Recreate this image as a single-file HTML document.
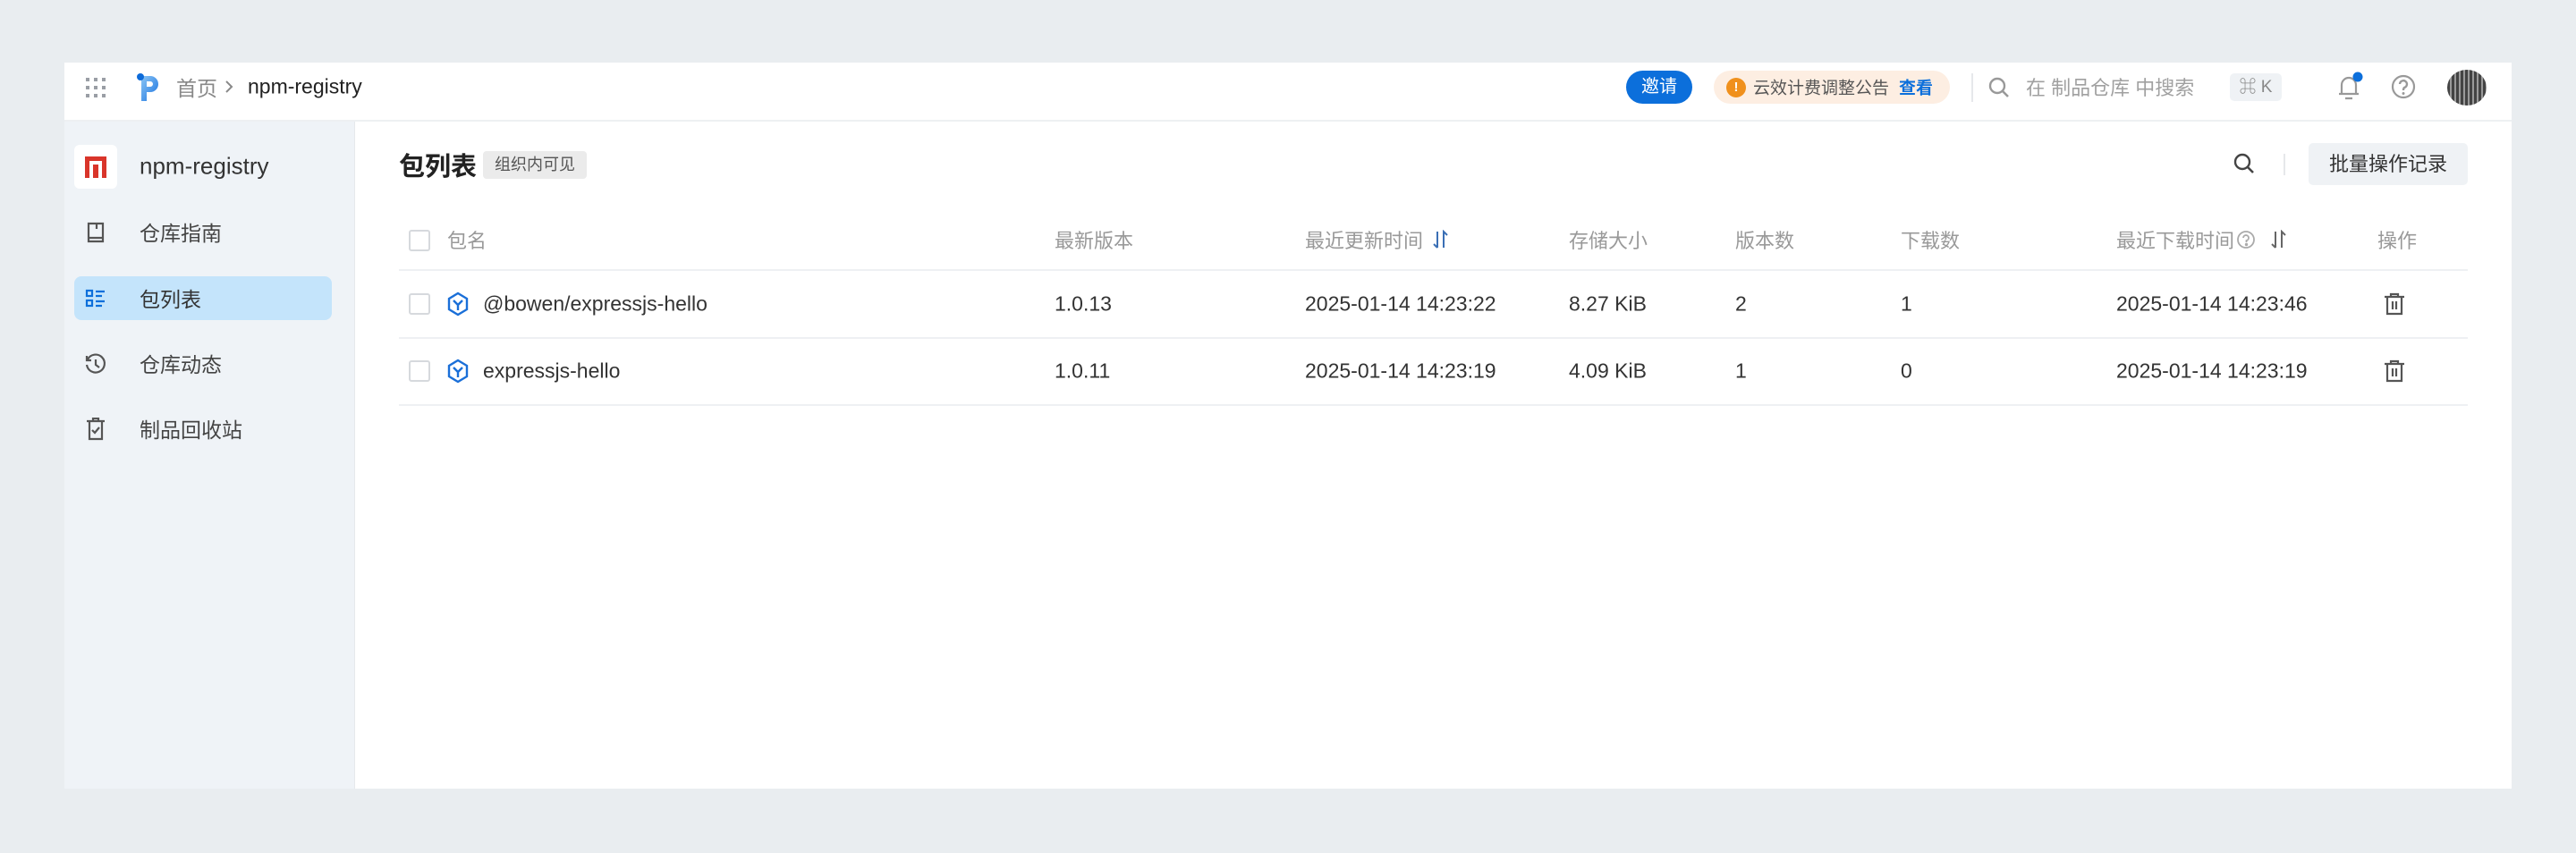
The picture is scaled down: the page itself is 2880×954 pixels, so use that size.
<!DOCTYPE html>
<html><head><meta charset="utf-8">
<style>
*{margin:0;padding:0;box-sizing:border-box}
body{width:2880px;height:954px;background:#e9edf0;font-family:"Liberation Sans","Noto Sans CJK SC",sans-serif;position:relative;overflow:hidden;color:#333}
.a{position:absolute;white-space:nowrap}
.card{position:absolute;left:72px;top:70px;width:2736px;height:812px;background:#fff}
.hdr{position:absolute;left:72px;top:70px;width:2736px;height:66px;border-bottom:2px solid #eef0f2;background:#fff}
.side{position:absolute;left:72px;top:136px;width:325px;height:746px;background:#eff3f7;border-right:1px solid #e6e9ec}
.t{font-size:23px;transform:translateY(-50%)}
.g{color:#999}
.line{position:absolute;left:446px;width:2313px;height:2px;background:#eef0f3}
.cb{position:absolute;width:24px;height:24px;border:2px solid #d6d9dd;border-radius:3px;background:#fff;left:457px}
</style></head><body>
<div class="card"></div>
<div class="hdr"></div>
<svg class="a" style="left:96px;top:87px" width="22" height="22" viewBox="0 0 22 22" fill="#9a9ea5">
<rect x="0" y="0" width="4" height="4"/><rect x="9" y="0" width="4" height="4"/><rect x="18" y="0" width="4" height="4"/>
<rect x="0" y="9" width="4" height="4"/><rect x="9" y="9" width="4" height="4"/><rect x="18" y="9" width="4" height="4"/>
<rect x="0" y="18" width="4" height="4"/><rect x="9" y="18" width="4" height="4"/><rect x="18" y="18" width="4" height="4"/></svg>
<svg class="a" style="left:152px;top:81px" width="28" height="32" viewBox="0 0 28 32">
<defs><linearGradient id="pg" x1="0" y1="0" x2="1" y2="1"><stop offset="0" stop-color="#8cc6f5"/><stop offset="1" stop-color="#1a73e0"/></linearGradient></defs>
<path d="M6 4 H16 A9 9 0 0 1 16 22 H12 V32 H6 Z M12 10 V16 H16 A3 3 0 0 0 16 10Z" fill="url(#pg)"/>
<circle cx="5" cy="5" r="4" fill="#0d6bd9"/></svg>
<div class="a t g" style="left:197px;top:97px;font-size:23px;color:#888">首页</div>
<svg class="a" style="left:250px;top:89px" width="12" height="16" viewBox="0 0 12 16"><path d="M3 2 L9 8 L3 14" fill="none" stroke="#888" stroke-width="2"/></svg>
<div class="a t" style="left:277px;top:97px;color:#222">npm-registry</div>
<div class="a" style="left:1818px;top:79px;width:74px;height:37px;border-radius:19px;background:#0c6fdb;color:#fff;font-size:20px;line-height:37px;text-align:center">邀请</div>
<div class="a" style="left:1916px;top:79px;width:264px;height:37px;border-radius:19px;background:#fdeee2"></div>
<div class="a" style="left:1930px;top:87px;width:22px;height:22px;border-radius:50%;background:#f0901c;color:#fff;font-size:15px;line-height:22px;text-align:center;font-weight:bold">!</div>
<div class="a t" style="left:1960px;top:97px;font-size:19px;color:#555">云效计费调整公告</div>
<div class="a t" style="left:2123px;top:97px;font-size:19px;color:#0c6fdb;font-weight:bold">查看</div>
<div class="a" style="left:2204px;top:82px;width:2px;height:32px;background:#e6e8eb"></div>
<svg class="a" style="left:2222px;top:85px" width="26" height="26" viewBox="0 0 26 26"><circle cx="11" cy="11" r="8" fill="none" stroke="#999" stroke-width="2.4"/><path d="M17 17 L23 23" stroke="#999" stroke-width="2.6"/></svg>
<div class="a t" style="left:2265px;top:97px;font-size:22px;color:#a0a0a0">在 制品仓库 中搜索</div>
<div class="a" style="left:2493px;top:82px;width:58px;height:31px;border-radius:5px;background:#eff2f5;color:#888;font-size:19px;line-height:31px;text-align:center">⌘ K</div>
<svg class="a" style="left:2612px;top:80px" width="30" height="34" viewBox="0 0 30 34"><path d="M6 25 V15 A8 8 0 0 1 22 15 V25 Z M3 25 H25 M10 30 H18" fill="none" stroke="#999" stroke-width="2.2"/><circle cx="24" cy="6" r="5.5" fill="#0c6fdb"/></svg>
<svg class="a" style="left:2673px;top:83px" width="28" height="28" viewBox="0 0 28 28"><circle cx="14" cy="14" r="12" fill="none" stroke="#999" stroke-width="2.2"/><path d="M10 11 A4 4 0 1 1 15 15 Q14 16 14 18" fill="none" stroke="#999" stroke-width="2.4"/><circle cx="14" cy="21.5" r="1.5" fill="#999"/></svg>
<div class="a" style="left:2736px;top:78px;width:44px;height:40px;border-radius:50%;background:repeating-linear-gradient(90deg,#222 0 3px,#888 3px 5px);opacity:.85"></div>
<div class="side"></div>
<div class="a" style="left:83px;top:162px;width:48px;height:49px;border-radius:6px;background:#fff"></div>
<div class="a" style="left:95px;top:175px;width:24px;height:24px;background:#d9352a"></div>
<div class="a" style="left:100px;top:180px;width:14px;height:19px;border:4px solid #fff;border-bottom:none"></div>
<div class="a t" style="left:156px;top:186px;font-size:26px;color:#333">npm-registry</div>
<div class="a" style="left:83px;top:309px;width:288px;height:49px;border-radius:8px;background:#c4e4fb"></div>
<svg class="a" style="left:96px;top:248px" width="22" height="24" viewBox="0 0 22 24"><path d="M3 2 H19 V22 H3 Z M3 18 H19 M12 2 V8" fill="none" stroke="#555" stroke-width="2.2"/></svg>
<div class="a t" style="left:156px;top:259px;font-size:23px;color:#444">仓库指南</div>
<svg class="a" style="left:95px;top:322px" width="24" height="24" viewBox="0 0 24 24" fill="none" stroke="#0c6fdb" stroke-width="2.2"><rect x="2" y="3" width="6" height="6"/><rect x="2" y="14" width="6" height="6"/><path d="M12 4H22M12 9H19M12 15H22M12 20H19"/></svg>
<div class="a t" style="left:156px;top:333px;font-size:23px;color:#333">包列表</div>
<svg class="a" style="left:94px;top:394px" width="26" height="26" viewBox="0 0 26 26" fill="none" stroke="#555" stroke-width="2.2"><path d="M4 8 A10 10 0 1 1 3 14"/><path d="M3 4 V9 H8"/><path d="M13 8 V14 L17 17"/></svg>
<div class="a t" style="left:156px;top:406px;font-size:23px;color:#444">仓库动态</div>
<svg class="a" style="left:95px;top:467px" width="24" height="26" viewBox="0 0 24 26" fill="none" stroke="#555" stroke-width="2.2"><path d="M2 4 H22 M5 4 V24 H19 V4 M9 4 V1 H15 V4 M8 14 L11 17 L16 11"/></svg>
<div class="a t" style="left:156px;top:479px;font-size:23px;color:#444">制品回收站</div>
<div class="a t" style="left:446px;top:184px;font-size:29px;font-weight:bold;color:#222">包列表</div>
<div class="a" style="left:540px;top:169px;width:116px;height:31px;border-radius:4px;background:#ebebeb;color:#555;font-size:18px;line-height:31px;text-align:center">组织内可见</div>
<svg class="a" style="left:2496px;top:170px" width="26" height="26" viewBox="0 0 26 26"><circle cx="11" cy="11" r="8" fill="none" stroke="#444" stroke-width="2.4"/><path d="M17 17 L23 23" stroke="#444" stroke-width="2.6"/></svg>
<div class="a" style="left:2553px;top:172px;width:2px;height:24px;background:#e6e8eb"></div>
<div class="a" style="left:2581px;top:160px;width:178px;height:47px;border-radius:5px;background:#eff2f5;color:#333;font-size:22px;line-height:47px;text-align:center">批量操作记录</div>
<div class="cb" style="top:257px"></div>
<div class="a t g" style="left:500px;top:268px;font-size:22px">包名</div>
<div class="a t g" style="left:1179px;top:268px;font-size:22px">最新版本</div>
<div class="a t g" style="left:1459px;top:268px;font-size:22px">最近更新时间</div>
<svg class="a" style="left:1602px;top:257px" width="18" height="22" viewBox="0 0 18 22" fill="none" stroke="#3a6fb5" stroke-width="2"><path d="M5 2 V20 M1 16 L5 20"/><path d="M12 20 V2 L16 6"/></svg>
<div class="a t g" style="left:1754px;top:268px;font-size:22px">存储大小</div>
<div class="a t g" style="left:1940px;top:268px;font-size:22px">版本数</div>
<div class="a t g" style="left:2125px;top:268px;font-size:22px">下载数</div>
<div class="a t g" style="left:2366px;top:268px;font-size:22px">最近下载时间</div>
<svg class="a" style="left:2500px;top:257px" width="22" height="22" viewBox="0 0 22 22" fill="none" stroke="#aaa" stroke-width="1.8"><circle cx="11" cy="11" r="9"/><path d="M8 9 A3 3 0 1 1 11.5 12 V14"/><circle cx="11.5" cy="16.5" r="0.8" fill="#aaa"/></svg>
<svg class="a" style="left:2539px;top:257px" width="18" height="22" viewBox="0 0 18 22" fill="none" stroke="#666" stroke-width="2"><path d="M5 2 V20 M1 16 L5 20"/><path d="M12 20 V2 L16 6"/></svg>
<div class="a t g" style="left:2658px;top:268px;font-size:22px">操作</div>
<div class="line" style="top:301px"></div>
<div class="cb" style="top:328px"></div>
<svg class="a" style="left:500px;top:326px" width="24" height="28" viewBox="0 0 24 28" fill="none" stroke="#1a6fd8" stroke-width="2.4"><path d="M12 2 L22 8 V20 L12 26 L2 20 V8 Z"/><path d="M7 10 L12 15 L17 10 M12 15 V21"/></svg>
<div class="a t" style="left:540px;top:340px">@bowen/expressjs-hello</div>
<div class="a t" style="left:1179px;top:340px">1.0.13</div>
<div class="a t" style="left:1459px;top:340px">2025-01-14 14:23:22</div>
<div class="a t" style="left:1754px;top:340px">8.27 KiB</div>
<div class="a t" style="left:1940px;top:340px">2</div>
<div class="a t" style="left:2125px;top:340px">1</div>
<div class="a t" style="left:2366px;top:340px">2025-01-14 14:23:46</div>
<svg class="a" style="left:2665px;top:327px" width="24" height="26" viewBox="0 0 24 26" fill="none" stroke="#555" stroke-width="2.2"><path d="M1 5 H23 M8 5 V2 H16 V5 M4 5 V24 H20 V5 M10 10 V19 M14 10 V19"/></svg>
<div class="line" style="top:377px"></div>
<div class="cb" style="top:403px"></div>
<svg class="a" style="left:500px;top:401px" width="24" height="28" viewBox="0 0 24 28" fill="none" stroke="#1a6fd8" stroke-width="2.4"><path d="M12 2 L22 8 V20 L12 26 L2 20 V8 Z"/><path d="M7 10 L12 15 L17 10 M12 15 V21"/></svg>
<div class="a t" style="left:540px;top:415px">expressjs-hello</div>
<div class="a t" style="left:1179px;top:415px">1.0.11</div>
<div class="a t" style="left:1459px;top:415px">2025-01-14 14:23:19</div>
<div class="a t" style="left:1754px;top:415px">4.09 KiB</div>
<div class="a t" style="left:1940px;top:415px">1</div>
<div class="a t" style="left:2125px;top:415px">0</div>
<div class="a t" style="left:2366px;top:415px">2025-01-14 14:23:19</div>
<svg class="a" style="left:2665px;top:402px" width="24" height="26" viewBox="0 0 24 26" fill="none" stroke="#555" stroke-width="2.2"><path d="M1 5 H23 M8 5 V2 H16 V5 M4 5 V24 H20 V5 M10 10 V19 M14 10 V19"/></svg>
<div class="line" style="top:452px"></div>
</body></html>
